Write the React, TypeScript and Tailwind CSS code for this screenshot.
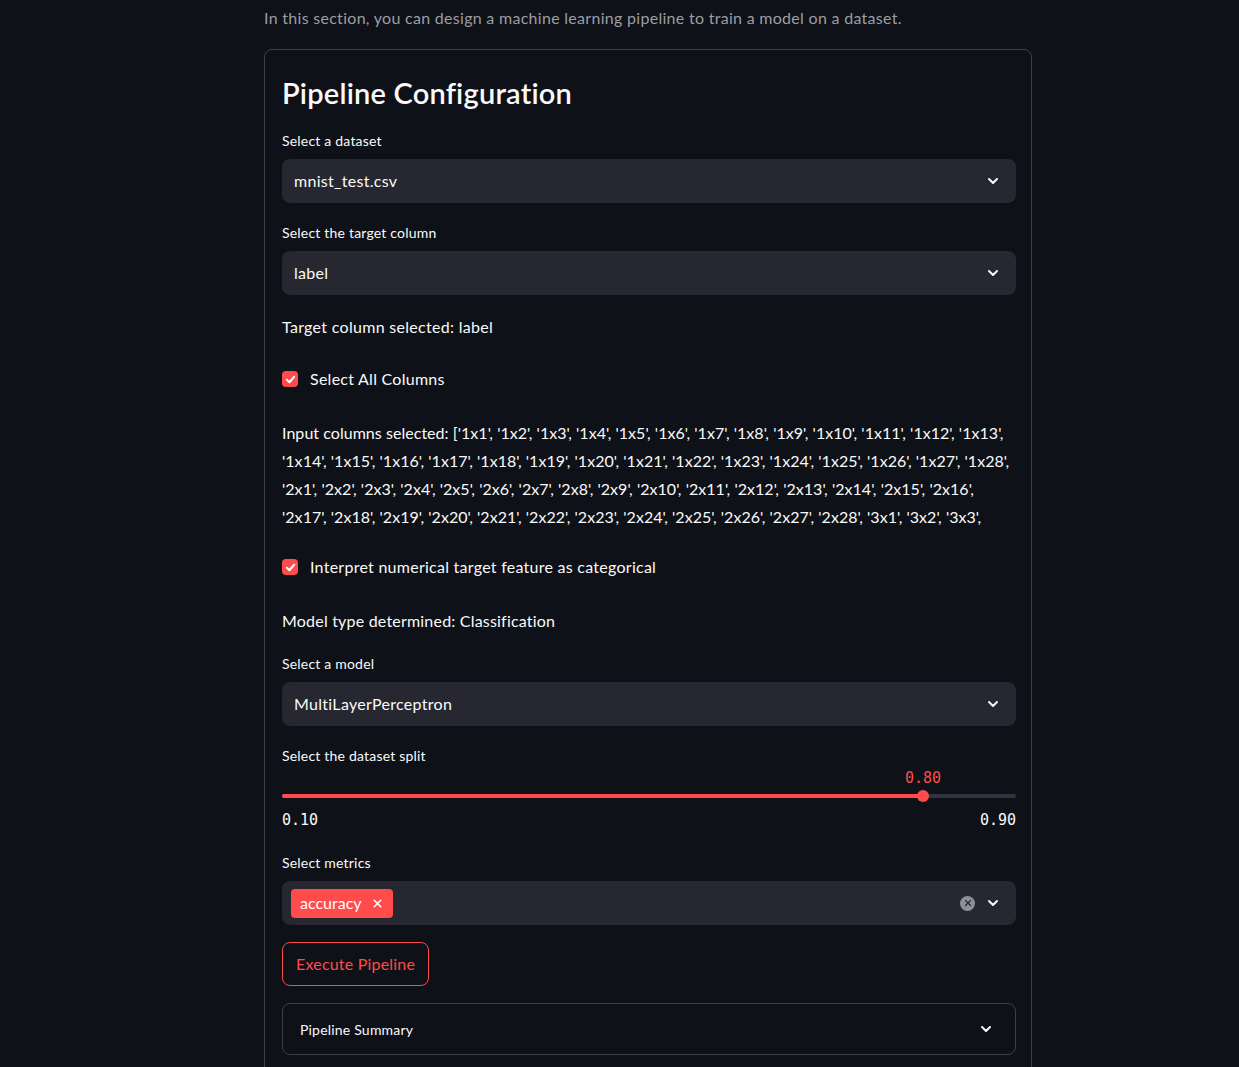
import { ChevronDown, X } from "lucide-react";

const font = { fontFamily: "Lato, 'Noto Sans', sans-serif" };

const inputLines = [
  "Input columns selected: ['1x1', '1x2', '1x3', '1x4', '1x5', '1x6', '1x7', '1x8', '1x9', '1x10', '1x11', '1x12', '1x13',",
  "'1x14', '1x15', '1x16', '1x17', '1x18', '1x19', '1x20', '1x21', '1x22', '1x23', '1x24', '1x25', '1x26', '1x27', '1x28',",
  "'2x1', '2x2', '2x3', '2x4', '2x5', '2x6', '2x7', '2x8', '2x9', '2x10', '2x11', '2x12', '2x13', '2x14', '2x15', '2x16',",
  "'2x17', '2x18', '2x19', '2x20', '2x21', '2x22', '2x23', '2x24', '2x25', '2x26', '2x27', '2x28', '3x1', '3x2', '3x3',",
];

function Label({ text, className = "" }: { text: string; className?: string }) {
  return (
    <div className={`h-[20px] text-[14px] leading-[20px] tracking-[0.2px] text-[#fafafa] ${className}`}>{text}</div>
  );
}

function Select({ value, className = "" }: { value: string; className?: string }) {
  return (
    <div className={`flex h-[44px] items-center justify-between rounded-lg bg-[#262730] pl-3 pr-[15px] ${className}`}>
      <span className="text-[16px] tracking-[0.3px] text-[#fafafa]">{value}</span>
      <ChevronDown size={16} strokeWidth={3} className="text-[#fafafa]" />
    </div>
  );
}

function Check({ label, className = "" }: { label: string; className?: string }) {
  return (
    <div className={`flex h-[20px] items-center gap-3 ${className}`}>
      <div className="flex h-4 w-4 items-center justify-center rounded bg-[#ff4b4b]">
        <svg width="11" height="11" viewBox="0 0 12 12" fill="none">
          <path d="M2 6.3 4.8 9 10 3" stroke="white" strokeWidth="2.2" strokeLinecap="round" strokeLinejoin="round" />
        </svg>
      </div>
      <span className="text-[16px] tracking-[0.26px] text-[#fafafa]">{label}</span>
    </div>
  );
}

export default function App() {
  return (
    <div className="min-h-screen overflow-hidden bg-[#0e1117] pl-[264px]" style={font}>
      <div className="w-[768px]">
        <p className="mt-[4px] h-[28px] text-[16px] leading-[28px] tracking-[0.29px] text-[#9c9ea3]">
          In this section, you can design a machine learning pipeline to train a model on a dataset.
        </p>

        <div className="mt-[17px] h-[1100px] rounded-lg border border-[#3d4045] pl-[17px] pr-[15px] pt-[23px]">
          <h1 className="h-[40px] text-[29px] font-semibold leading-[40px] tracking-[0.2px] text-[#fafafa]">
            Pipeline Configuration
          </h1>

          <Label text="Select a dataset" className="mt-[18px]" />
          <Select value="mnist_test.csv" className="mt-[8px]" />

          <Label text="Select the target column" className="mt-[20px]" />
          <Select value="label" className="mt-[8px]" />

          <p className="mt-[18px] h-[28px] text-[16px] leading-[28px] tracking-[0.3px] text-[#fafafa]">
            Target column selected: label
          </p>

          <Check label="Select All Columns" className="mt-[28px]" />

          <div className="mt-[30px] text-[16px] leading-[28px] tracking-[0.04px] text-[#fafafa]">
            {inputLines.map((l) => (
              <div key={l} className="whitespace-nowrap">
                {l}
              </div>
            ))}
          </div>

          <Check label="Interpret numerical target feature as categorical" className="mt-[26px]" />

          <p className="mt-[30px] h-[28px] text-[16px] leading-[28px] tracking-[0.2px] text-[#fafafa]">
            Model type determined: Classification
          </p>

          <Label text="Select a model" className="mt-[19px]" />
          <Select value="MultiLayerPerceptron" className="mt-[8px]" />

          <Label text="Select the dataset split" className="mt-[20px]" />

          <div className="mt-[4px]" style={{ fontFamily: "'DejaVu Sans Mono', monospace" }}>
            <div className="relative h-[16px]">
              <span className="absolute left-[641px] -translate-x-1/2 text-[15px] leading-[16px] text-[#ff4b4b]">
                0.80
              </span>
            </div>
            <div className="relative flex h-[20px] items-center">
              <div className="h-[4px] w-full rounded-full bg-[#31333f]">
                <div className="h-[4px] w-[641px] rounded-full bg-[#ff4b4b]" />
              </div>
              <div className="absolute left-[635px] top-[4px] h-[12px] w-[12px] rounded-full bg-[#ff4b4b]" />
            </div>
            <div className="mt-[6px] flex h-[16px] justify-between text-[15px] leading-[16px] text-[#fafafa]">
              <span>0.10</span>
              <span>0.90</span>
            </div>
          </div>

          <Label text="Select metrics" className="mt-[25px]" />
          <div className="mt-[8px] flex h-[44px] items-center justify-between rounded-lg bg-[#262730] pl-[9px] pr-[15px]">
            <div className="flex h-[29px] items-center gap-[9px] rounded bg-[#ff4b4b] pl-[9px] pr-[9px] text-[16px] text-white">
              <span>accuracy</span>
              <X size={13} strokeWidth={3} />
            </div>
            <div className="flex items-center gap-[10px]">
              <div className="flex h-[15px] w-[15px] items-center justify-center rounded-full bg-[#8e909a]">
                <X size={10} strokeWidth={3} className="text-[#262730]" />
              </div>
              <ChevronDown size={16} strokeWidth={3} className="text-[#fafafa]" />
            </div>
          </div>

          <button className="mt-[17px] flex h-[44px] items-center rounded-lg border border-[#ff4b4b] px-[13px] text-[16px] tracking-[0.2px] text-[#ff4b4b]">
            Execute Pipeline
          </button>

          <div className="mt-[17px] flex h-[52px] items-center justify-between rounded-lg border border-[#3d4045] pl-[17px] pr-[21px]">
            <span className="text-[14px] tracking-[0.2px] text-[#fafafa]">Pipeline Summary</span>
            <ChevronDown size={16} strokeWidth={3} className="text-[#fafafa]" />
          </div>
        </div>
      </div>
    </div>
  );
}
